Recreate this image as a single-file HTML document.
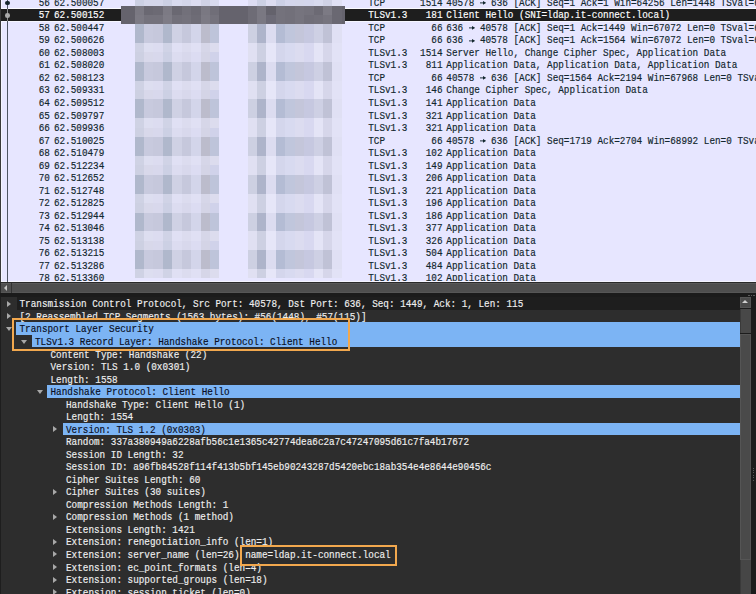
<!DOCTYPE html><html><head><meta charset="utf-8"><style>
*{margin:0;padding:0;box-sizing:border-box}
html,body{width:756px;height:594px;overflow:hidden;background:#1b1b1b}
body{position:relative;font-family:"Liberation Mono",monospace;font-size:9.3333px}
.a{position:absolute}
.pl{position:absolute;left:0;top:0;width:756px;height:282px;background:#e7e6ff;overflow:hidden;border-left:1px solid #3a3a3a}
.r{position:absolute;left:0;width:756px;height:12.53px;color:#12272e;white-space:pre}
.r span{position:absolute;top:1.5px;line-height:12.53px;transform:scaleY(1.14);transform-origin:0 8.75px;-webkit-text-stroke:0.15px currentColor}
.sel{background:#1e1e1e;color:#ffffff}
.dt{position:absolute;left:0;top:297.4px;width:740px;height:297px;background:#2d2d2d;overflow:hidden}
.d{position:absolute;left:0;width:740px;height:12.53px;color:#e6e6e6;white-space:pre}
.d span.t{position:absolute;top:2px;line-height:12.53px;transform:scaleY(1.14);transform-origin:0 8.75px;-webkit-text-stroke:0.15px currentColor}
.hl{position:absolute;top:0;height:100%;right:0;background:#7cb4f4}
</style></head><body>

<div class="pl">
<div class="r" style="top:-3.73px">
<span style="left:37.70px">56</span>
<span style="left:52.90px">62.500057</span>
<span style="left:367.20px">TCP</span>
<span style="left:419.10px">1514</span>
<svg class="a" style="left:479.30px;top:5.0px" width="6.2" height="3.8" viewBox="0 0 6.2 3.8"><path d="M0 1.9H3.6" stroke="#12272e" stroke-width="0.95"/><path d="M3.0 0.1L6.2 1.9L3.0 3.7Z" fill="#12272e"/></svg>
<span style="left:445.30px">40578   636 [ACK] Seq=1 Ack=1 Win=64256 Len=1448 TSval=6</span>
</div>
<div class="r sel" style="top:8.80px">
<span style="left:37.70px">57</span>
<span style="left:52.90px">62.500152</span>
<span style="left:367.20px">TLSv1.3</span>
<span style="left:424.70px">181</span>
<span style="left:445.30px">Client Hello (SNI=ldap.it-connect.local)</span>
</div>
<div class="r" style="top:21.33px">
<span style="left:37.70px">58</span>
<span style="left:52.90px">62.500447</span>
<span style="left:367.20px">TCP</span>
<span style="left:430.30px">66</span>
<svg class="a" style="left:468.10px;top:5.0px" width="6.2" height="3.8" viewBox="0 0 6.2 3.8"><path d="M0 1.9H3.6" stroke="#12272e" stroke-width="0.95"/><path d="M3.0 0.1L6.2 1.9L3.0 3.7Z" fill="#12272e"/></svg>
<span style="left:445.30px">636   40578 [ACK] Seq=1 Ack=1449 Win=67072 Len=0 TSval=6</span>
</div>
<div class="r" style="top:33.86px">
<span style="left:37.70px">59</span>
<span style="left:52.90px">62.500626</span>
<span style="left:367.20px">TCP</span>
<span style="left:430.30px">66</span>
<svg class="a" style="left:468.10px;top:5.0px" width="6.2" height="3.8" viewBox="0 0 6.2 3.8"><path d="M0 1.9H3.6" stroke="#12272e" stroke-width="0.95"/><path d="M3.0 0.1L6.2 1.9L3.0 3.7Z" fill="#12272e"/></svg>
<span style="left:445.30px">636   40578 [ACK] Seq=1 Ack=1564 Win=67072 Len=0 TSval=6</span>
</div>
<div class="r" style="top:46.39px">
<span style="left:37.70px">60</span>
<span style="left:52.90px">62.508003</span>
<span style="left:367.20px">TLSv1.3</span>
<span style="left:419.10px">1514</span>
<span style="left:445.30px">Server Hello, Change Cipher Spec, Application Data</span>
</div>
<div class="r" style="top:58.92px">
<span style="left:37.70px">61</span>
<span style="left:52.90px">62.508020</span>
<span style="left:367.20px">TLSv1.3</span>
<span style="left:424.70px">811</span>
<span style="left:445.30px">Application Data, Application Data, Application Data</span>
</div>
<div class="r" style="top:71.45px">
<span style="left:37.70px">62</span>
<span style="left:52.90px">62.508123</span>
<span style="left:367.20px">TCP</span>
<span style="left:430.30px">66</span>
<svg class="a" style="left:479.30px;top:5.0px" width="6.2" height="3.8" viewBox="0 0 6.2 3.8"><path d="M0 1.9H3.6" stroke="#12272e" stroke-width="0.95"/><path d="M3.0 0.1L6.2 1.9L3.0 3.7Z" fill="#12272e"/></svg>
<span style="left:445.30px">40578   636 [ACK] Seq=1564 Ack=2194 Win=67968 Len=0 TSval=6</span>
</div>
<div class="r" style="top:83.98px">
<span style="left:37.70px">63</span>
<span style="left:52.90px">62.509331</span>
<span style="left:367.20px">TLSv1.3</span>
<span style="left:424.70px">146</span>
<span style="left:445.30px">Change Cipher Spec, Application Data</span>
</div>
<div class="r" style="top:96.51px">
<span style="left:37.70px">64</span>
<span style="left:52.90px">62.509512</span>
<span style="left:367.20px">TLSv1.3</span>
<span style="left:424.70px">141</span>
<span style="left:445.30px">Application Data</span>
</div>
<div class="r" style="top:109.04px">
<span style="left:37.70px">65</span>
<span style="left:52.90px">62.509797</span>
<span style="left:367.20px">TLSv1.3</span>
<span style="left:424.70px">321</span>
<span style="left:445.30px">Application Data</span>
</div>
<div class="r" style="top:121.57px">
<span style="left:37.70px">66</span>
<span style="left:52.90px">62.509936</span>
<span style="left:367.20px">TLSv1.3</span>
<span style="left:424.70px">321</span>
<span style="left:445.30px">Application Data</span>
</div>
<div class="r" style="top:134.10px">
<span style="left:37.70px">67</span>
<span style="left:52.90px">62.510025</span>
<span style="left:367.20px">TCP</span>
<span style="left:430.30px">66</span>
<svg class="a" style="left:479.30px;top:5.0px" width="6.2" height="3.8" viewBox="0 0 6.2 3.8"><path d="M0 1.9H3.6" stroke="#12272e" stroke-width="0.95"/><path d="M3.0 0.1L6.2 1.9L3.0 3.7Z" fill="#12272e"/></svg>
<span style="left:445.30px">40578   636 [ACK] Seq=1719 Ack=2704 Win=68992 Len=0 TSval=6</span>
</div>
<div class="r" style="top:146.63px">
<span style="left:37.70px">68</span>
<span style="left:52.90px">62.510479</span>
<span style="left:367.20px">TLSv1.3</span>
<span style="left:424.70px">102</span>
<span style="left:445.30px">Application Data</span>
</div>
<div class="r" style="top:159.16px">
<span style="left:37.70px">69</span>
<span style="left:52.90px">62.512234</span>
<span style="left:367.20px">TLSv1.3</span>
<span style="left:424.70px">149</span>
<span style="left:445.30px">Application Data</span>
</div>
<div class="r" style="top:171.69px">
<span style="left:37.70px">70</span>
<span style="left:52.90px">62.512652</span>
<span style="left:367.20px">TLSv1.3</span>
<span style="left:424.70px">206</span>
<span style="left:445.30px">Application Data</span>
</div>
<div class="r" style="top:184.22px">
<span style="left:37.70px">71</span>
<span style="left:52.90px">62.512748</span>
<span style="left:367.20px">TLSv1.3</span>
<span style="left:424.70px">221</span>
<span style="left:445.30px">Application Data</span>
</div>
<div class="r" style="top:196.75px">
<span style="left:37.70px">72</span>
<span style="left:52.90px">62.512825</span>
<span style="left:367.20px">TLSv1.3</span>
<span style="left:424.70px">196</span>
<span style="left:445.30px">Application Data</span>
</div>
<div class="r" style="top:209.28px">
<span style="left:37.70px">73</span>
<span style="left:52.90px">62.512944</span>
<span style="left:367.20px">TLSv1.3</span>
<span style="left:424.70px">186</span>
<span style="left:445.30px">Application Data</span>
</div>
<div class="r" style="top:221.81px">
<span style="left:37.70px">74</span>
<span style="left:52.90px">62.513046</span>
<span style="left:367.20px">TLSv1.3</span>
<span style="left:424.70px">377</span>
<span style="left:445.30px">Application Data</span>
</div>
<div class="r" style="top:234.34px">
<span style="left:37.70px">75</span>
<span style="left:52.90px">62.513138</span>
<span style="left:367.20px">TLSv1.3</span>
<span style="left:424.70px">326</span>
<span style="left:445.30px">Application Data</span>
</div>
<div class="r" style="top:246.87px">
<span style="left:37.70px">76</span>
<span style="left:52.90px">62.513215</span>
<span style="left:367.20px">TLSv1.3</span>
<span style="left:424.70px">504</span>
<span style="left:445.30px">Application Data</span>
</div>
<div class="r" style="top:259.40px">
<span style="left:37.70px">77</span>
<span style="left:52.90px">62.513286</span>
<span style="left:367.20px">TLSv1.3</span>
<span style="left:424.70px">484</span>
<span style="left:445.30px">Application Data</span>
</div>
<div class="r" style="top:271.93px">
<span style="left:37.70px">78</span>
<span style="left:52.90px">62.513360</span>
<span style="left:367.20px">TLSv1.3</span>
<span style="left:424.70px">102</span>
<span style="left:445.30px">Application Data</span>
</div>
<div class="a" style="left:1px;top:7.8px;width:755px;height:1px;background:#fbfbff"></div>
<div class="a" style="left:1px;top:20.7px;width:755px;height:1px;background:#f6f6ff"></div>
<div class="a" style="left:120px;top:5.6px;width:223.8px;height:18.4px;background:#65636d"></div>
<div class="a" style="left:133.60px;top:0;width:9.42px;height:5.6px;background:#ccd0e4"></div>
<div class="a" style="left:133.60px;top:5.6px;width:9.42px;height:9.2px;background:#7a7882"></div>
<div class="a" style="left:133.60px;top:14.8px;width:9.42px;height:9.2px;background:#7c7a84"></div>
<div class="a" style="left:133.60px;top:24.00px;width:9.42px;height:9.43px;background:#b0b8cc"></div>
<div class="a" style="left:133.60px;top:33.43px;width:9.42px;height:9.43px;background:#b0b8cc"></div>
<div class="a" style="left:133.60px;top:42.86px;width:9.42px;height:9.43px;background:#cfd2e4"></div>
<div class="a" style="left:133.60px;top:52.29px;width:9.42px;height:9.43px;background:#cdd0e2"></div>
<div class="a" style="left:133.60px;top:61.72px;width:9.42px;height:9.43px;background:#b0b8cc"></div>
<div class="a" style="left:133.60px;top:71.15px;width:9.42px;height:9.43px;background:#b0b8cc"></div>
<div class="a" style="left:133.60px;top:80.58px;width:9.42px;height:9.43px;background:#cfd2e4"></div>
<div class="a" style="left:133.60px;top:90.01px;width:9.42px;height:9.43px;background:#cdd0e2"></div>
<div class="a" style="left:133.60px;top:99.44px;width:9.42px;height:9.43px;background:#b0b8cc"></div>
<div class="a" style="left:133.60px;top:108.87px;width:9.42px;height:9.43px;background:#b0b8cc"></div>
<div class="a" style="left:133.60px;top:118.30px;width:9.42px;height:9.43px;background:#cfd2e4"></div>
<div class="a" style="left:133.60px;top:127.73px;width:9.42px;height:9.43px;background:#cdd0e2"></div>
<div class="a" style="left:133.60px;top:137.16px;width:9.42px;height:9.43px;background:#b0b8cc"></div>
<div class="a" style="left:133.60px;top:146.59px;width:9.42px;height:9.43px;background:#b0b8cc"></div>
<div class="a" style="left:133.60px;top:156.02px;width:9.42px;height:9.43px;background:#cfd2e4"></div>
<div class="a" style="left:133.60px;top:165.45px;width:9.42px;height:9.43px;background:#cdd0e2"></div>
<div class="a" style="left:133.60px;top:174.88px;width:9.42px;height:9.43px;background:#b0b8cc"></div>
<div class="a" style="left:133.60px;top:184.31px;width:9.42px;height:9.43px;background:#b0b8cc"></div>
<div class="a" style="left:133.60px;top:193.74px;width:9.42px;height:9.43px;background:#cfd2e4"></div>
<div class="a" style="left:133.60px;top:203.17px;width:9.42px;height:9.43px;background:#cdd0e2"></div>
<div class="a" style="left:133.60px;top:212.60px;width:9.42px;height:9.43px;background:#b0b8cc"></div>
<div class="a" style="left:133.60px;top:222.03px;width:9.42px;height:9.43px;background:#b0b8cc"></div>
<div class="a" style="left:133.60px;top:231.46px;width:9.42px;height:9.43px;background:#cfd2e4"></div>
<div class="a" style="left:133.60px;top:240.89px;width:9.42px;height:9.43px;background:#cdd0e2"></div>
<div class="a" style="left:133.60px;top:250.32px;width:9.42px;height:9.43px;background:#b0b8cc"></div>
<div class="a" style="left:133.60px;top:259.75px;width:9.42px;height:9.43px;background:#b0b8cc"></div>
<div class="a" style="left:133.60px;top:269.18px;width:9.42px;height:9.12px;background:#cfd2e4"></div>
<div class="a" style="left:143.02px;top:0;width:9.42px;height:5.6px;background:#d4d6ea"></div>
<div class="a" style="left:143.02px;top:5.6px;width:9.42px;height:9.2px;background:#6a6872"></div>
<div class="a" style="left:143.02px;top:14.8px;width:9.42px;height:9.2px;background:#74727c"></div>
<div class="a" style="left:143.02px;top:24.00px;width:9.42px;height:9.43px;background:#c8cade"></div>
<div class="a" style="left:143.02px;top:33.43px;width:9.42px;height:9.43px;background:#c8cade"></div>
<div class="a" style="left:143.02px;top:42.86px;width:9.42px;height:9.43px;background:#dddef0"></div>
<div class="a" style="left:143.02px;top:52.29px;width:9.42px;height:9.43px;background:#d8d8ea"></div>
<div class="a" style="left:143.02px;top:61.72px;width:9.42px;height:9.43px;background:#c8cade"></div>
<div class="a" style="left:143.02px;top:71.15px;width:9.42px;height:9.43px;background:#c8cade"></div>
<div class="a" style="left:143.02px;top:80.58px;width:9.42px;height:9.43px;background:#dddef0"></div>
<div class="a" style="left:143.02px;top:90.01px;width:9.42px;height:9.43px;background:#d8d8ea"></div>
<div class="a" style="left:143.02px;top:99.44px;width:9.42px;height:9.43px;background:#c8cade"></div>
<div class="a" style="left:143.02px;top:108.87px;width:9.42px;height:9.43px;background:#c8cade"></div>
<div class="a" style="left:143.02px;top:118.30px;width:9.42px;height:9.43px;background:#dddef0"></div>
<div class="a" style="left:143.02px;top:127.73px;width:9.42px;height:9.43px;background:#d8d8ea"></div>
<div class="a" style="left:143.02px;top:137.16px;width:9.42px;height:9.43px;background:#c8cade"></div>
<div class="a" style="left:143.02px;top:146.59px;width:9.42px;height:9.43px;background:#c8cade"></div>
<div class="a" style="left:143.02px;top:156.02px;width:9.42px;height:9.43px;background:#dddef0"></div>
<div class="a" style="left:143.02px;top:165.45px;width:9.42px;height:9.43px;background:#d8d8ea"></div>
<div class="a" style="left:143.02px;top:174.88px;width:9.42px;height:9.43px;background:#c8cade"></div>
<div class="a" style="left:143.02px;top:184.31px;width:9.42px;height:9.43px;background:#c8cade"></div>
<div class="a" style="left:143.02px;top:193.74px;width:9.42px;height:9.43px;background:#dddef0"></div>
<div class="a" style="left:143.02px;top:203.17px;width:9.42px;height:9.43px;background:#d8d8ea"></div>
<div class="a" style="left:143.02px;top:212.60px;width:9.42px;height:9.43px;background:#c8cade"></div>
<div class="a" style="left:143.02px;top:222.03px;width:9.42px;height:9.43px;background:#c8cade"></div>
<div class="a" style="left:143.02px;top:231.46px;width:9.42px;height:9.43px;background:#dddef0"></div>
<div class="a" style="left:143.02px;top:240.89px;width:9.42px;height:9.43px;background:#d8d8ea"></div>
<div class="a" style="left:143.02px;top:250.32px;width:9.42px;height:9.43px;background:#c8cade"></div>
<div class="a" style="left:143.02px;top:259.75px;width:9.42px;height:9.43px;background:#c8cade"></div>
<div class="a" style="left:143.02px;top:269.18px;width:9.42px;height:9.12px;background:#dddef0"></div>
<div class="a" style="left:152.44px;top:0;width:9.42px;height:5.6px;background:#d4d6ea"></div>
<div class="a" style="left:152.44px;top:5.6px;width:9.42px;height:9.2px;background:#6c6a74"></div>
<div class="a" style="left:152.44px;top:14.8px;width:9.42px;height:9.2px;background:#74727c"></div>
<div class="a" style="left:152.44px;top:24.00px;width:9.42px;height:9.43px;background:#c6c8dc"></div>
<div class="a" style="left:152.44px;top:33.43px;width:9.42px;height:9.43px;background:#c6c8dc"></div>
<div class="a" style="left:152.44px;top:42.86px;width:9.42px;height:9.43px;background:#dcdcf0"></div>
<div class="a" style="left:152.44px;top:52.29px;width:9.42px;height:9.43px;background:#d8d8ec"></div>
<div class="a" style="left:152.44px;top:61.72px;width:9.42px;height:9.43px;background:#c6c8dc"></div>
<div class="a" style="left:152.44px;top:71.15px;width:9.42px;height:9.43px;background:#c6c8dc"></div>
<div class="a" style="left:152.44px;top:80.58px;width:9.42px;height:9.43px;background:#dcdcf0"></div>
<div class="a" style="left:152.44px;top:90.01px;width:9.42px;height:9.43px;background:#d8d8ec"></div>
<div class="a" style="left:152.44px;top:99.44px;width:9.42px;height:9.43px;background:#c6c8dc"></div>
<div class="a" style="left:152.44px;top:108.87px;width:9.42px;height:9.43px;background:#c6c8dc"></div>
<div class="a" style="left:152.44px;top:118.30px;width:9.42px;height:9.43px;background:#dcdcf0"></div>
<div class="a" style="left:152.44px;top:127.73px;width:9.42px;height:9.43px;background:#d8d8ec"></div>
<div class="a" style="left:152.44px;top:137.16px;width:9.42px;height:9.43px;background:#c6c8dc"></div>
<div class="a" style="left:152.44px;top:146.59px;width:9.42px;height:9.43px;background:#c6c8dc"></div>
<div class="a" style="left:152.44px;top:156.02px;width:9.42px;height:9.43px;background:#dcdcf0"></div>
<div class="a" style="left:152.44px;top:165.45px;width:9.42px;height:9.43px;background:#d8d8ec"></div>
<div class="a" style="left:152.44px;top:174.88px;width:9.42px;height:9.43px;background:#c6c8dc"></div>
<div class="a" style="left:152.44px;top:184.31px;width:9.42px;height:9.43px;background:#c6c8dc"></div>
<div class="a" style="left:152.44px;top:193.74px;width:9.42px;height:9.43px;background:#dcdcf0"></div>
<div class="a" style="left:152.44px;top:203.17px;width:9.42px;height:9.43px;background:#d8d8ec"></div>
<div class="a" style="left:152.44px;top:212.60px;width:9.42px;height:9.43px;background:#c6c8dc"></div>
<div class="a" style="left:152.44px;top:222.03px;width:9.42px;height:9.43px;background:#c6c8dc"></div>
<div class="a" style="left:152.44px;top:231.46px;width:9.42px;height:9.43px;background:#dcdcf0"></div>
<div class="a" style="left:152.44px;top:240.89px;width:9.42px;height:9.43px;background:#d8d8ec"></div>
<div class="a" style="left:152.44px;top:250.32px;width:9.42px;height:9.43px;background:#c6c8dc"></div>
<div class="a" style="left:152.44px;top:259.75px;width:9.42px;height:9.43px;background:#c6c8dc"></div>
<div class="a" style="left:152.44px;top:269.18px;width:9.42px;height:9.12px;background:#dcdcf0"></div>
<div class="a" style="left:161.86px;top:0;width:9.42px;height:5.6px;background:#ccd0e4"></div>
<div class="a" style="left:161.86px;top:5.6px;width:9.42px;height:9.2px;background:#7c7a84"></div>
<div class="a" style="left:161.86px;top:14.8px;width:9.42px;height:9.2px;background:#7e7c86"></div>
<div class="a" style="left:161.86px;top:24.00px;width:9.42px;height:9.43px;background:#b0b8cc"></div>
<div class="a" style="left:161.86px;top:33.43px;width:9.42px;height:9.43px;background:#b0b8cc"></div>
<div class="a" style="left:161.86px;top:42.86px;width:9.42px;height:9.43px;background:#d0d3e6"></div>
<div class="a" style="left:161.86px;top:52.29px;width:9.42px;height:9.43px;background:#ccd0e4"></div>
<div class="a" style="left:161.86px;top:61.72px;width:9.42px;height:9.43px;background:#b0b8cc"></div>
<div class="a" style="left:161.86px;top:71.15px;width:9.42px;height:9.43px;background:#b0b8cc"></div>
<div class="a" style="left:161.86px;top:80.58px;width:9.42px;height:9.43px;background:#d0d3e6"></div>
<div class="a" style="left:161.86px;top:90.01px;width:9.42px;height:9.43px;background:#ccd0e4"></div>
<div class="a" style="left:161.86px;top:99.44px;width:9.42px;height:9.43px;background:#b0b8cc"></div>
<div class="a" style="left:161.86px;top:108.87px;width:9.42px;height:9.43px;background:#b0b8cc"></div>
<div class="a" style="left:161.86px;top:118.30px;width:9.42px;height:9.43px;background:#d0d3e6"></div>
<div class="a" style="left:161.86px;top:127.73px;width:9.42px;height:9.43px;background:#ccd0e4"></div>
<div class="a" style="left:161.86px;top:137.16px;width:9.42px;height:9.43px;background:#b0b8cc"></div>
<div class="a" style="left:161.86px;top:146.59px;width:9.42px;height:9.43px;background:#b0b8cc"></div>
<div class="a" style="left:161.86px;top:156.02px;width:9.42px;height:9.43px;background:#d0d3e6"></div>
<div class="a" style="left:161.86px;top:165.45px;width:9.42px;height:9.43px;background:#ccd0e4"></div>
<div class="a" style="left:161.86px;top:174.88px;width:9.42px;height:9.43px;background:#b0b8cc"></div>
<div class="a" style="left:161.86px;top:184.31px;width:9.42px;height:9.43px;background:#b0b8cc"></div>
<div class="a" style="left:161.86px;top:193.74px;width:9.42px;height:9.43px;background:#d0d3e6"></div>
<div class="a" style="left:161.86px;top:203.17px;width:9.42px;height:9.43px;background:#ccd0e4"></div>
<div class="a" style="left:161.86px;top:212.60px;width:9.42px;height:9.43px;background:#b0b8cc"></div>
<div class="a" style="left:161.86px;top:222.03px;width:9.42px;height:9.43px;background:#b0b8cc"></div>
<div class="a" style="left:161.86px;top:231.46px;width:9.42px;height:9.43px;background:#d0d3e6"></div>
<div class="a" style="left:161.86px;top:240.89px;width:9.42px;height:9.43px;background:#ccd0e4"></div>
<div class="a" style="left:161.86px;top:250.32px;width:9.42px;height:9.43px;background:#b0b8cc"></div>
<div class="a" style="left:161.86px;top:259.75px;width:9.42px;height:9.43px;background:#b0b8cc"></div>
<div class="a" style="left:161.86px;top:269.18px;width:9.42px;height:9.12px;background:#d0d3e6"></div>
<div class="a" style="left:171.28px;top:0;width:9.42px;height:5.6px;background:#d8daee"></div>
<div class="a" style="left:171.28px;top:5.6px;width:9.42px;height:9.2px;background:#6a6872"></div>
<div class="a" style="left:171.28px;top:14.8px;width:9.42px;height:9.2px;background:#72707a"></div>
<div class="a" style="left:171.28px;top:24.00px;width:9.42px;height:9.43px;background:#cfd1e4"></div>
<div class="a" style="left:171.28px;top:33.43px;width:9.42px;height:9.43px;background:#cfd1e4"></div>
<div class="a" style="left:171.28px;top:42.86px;width:9.42px;height:9.43px;background:#e0e0f4"></div>
<div class="a" style="left:171.28px;top:52.29px;width:9.42px;height:9.43px;background:#dcdcf0"></div>
<div class="a" style="left:171.28px;top:61.72px;width:9.42px;height:9.43px;background:#cfd1e4"></div>
<div class="a" style="left:171.28px;top:71.15px;width:9.42px;height:9.43px;background:#cfd1e4"></div>
<div class="a" style="left:171.28px;top:80.58px;width:9.42px;height:9.43px;background:#e0e0f4"></div>
<div class="a" style="left:171.28px;top:90.01px;width:9.42px;height:9.43px;background:#dcdcf0"></div>
<div class="a" style="left:171.28px;top:99.44px;width:9.42px;height:9.43px;background:#cfd1e4"></div>
<div class="a" style="left:171.28px;top:108.87px;width:9.42px;height:9.43px;background:#cfd1e4"></div>
<div class="a" style="left:171.28px;top:118.30px;width:9.42px;height:9.43px;background:#e0e0f4"></div>
<div class="a" style="left:171.28px;top:127.73px;width:9.42px;height:9.43px;background:#dcdcf0"></div>
<div class="a" style="left:171.28px;top:137.16px;width:9.42px;height:9.43px;background:#cfd1e4"></div>
<div class="a" style="left:171.28px;top:146.59px;width:9.42px;height:9.43px;background:#cfd1e4"></div>
<div class="a" style="left:171.28px;top:156.02px;width:9.42px;height:9.43px;background:#e0e0f4"></div>
<div class="a" style="left:171.28px;top:165.45px;width:9.42px;height:9.43px;background:#dcdcf0"></div>
<div class="a" style="left:171.28px;top:174.88px;width:9.42px;height:9.43px;background:#cfd1e4"></div>
<div class="a" style="left:171.28px;top:184.31px;width:9.42px;height:9.43px;background:#cfd1e4"></div>
<div class="a" style="left:171.28px;top:193.74px;width:9.42px;height:9.43px;background:#e0e0f4"></div>
<div class="a" style="left:171.28px;top:203.17px;width:9.42px;height:9.43px;background:#dcdcf0"></div>
<div class="a" style="left:171.28px;top:212.60px;width:9.42px;height:9.43px;background:#cfd1e4"></div>
<div class="a" style="left:171.28px;top:222.03px;width:9.42px;height:9.43px;background:#cfd1e4"></div>
<div class="a" style="left:171.28px;top:231.46px;width:9.42px;height:9.43px;background:#e0e0f4"></div>
<div class="a" style="left:171.28px;top:240.89px;width:9.42px;height:9.43px;background:#dcdcf0"></div>
<div class="a" style="left:171.28px;top:250.32px;width:9.42px;height:9.43px;background:#cfd1e4"></div>
<div class="a" style="left:171.28px;top:259.75px;width:9.42px;height:9.43px;background:#cfd1e4"></div>
<div class="a" style="left:171.28px;top:269.18px;width:9.42px;height:9.12px;background:#e0e0f4"></div>
<div class="a" style="left:180.70px;top:0;width:9.42px;height:5.6px;background:#d4d6ea"></div>
<div class="a" style="left:180.70px;top:5.6px;width:9.42px;height:9.2px;background:#72707a"></div>
<div class="a" style="left:180.70px;top:14.8px;width:9.42px;height:9.2px;background:#74727c"></div>
<div class="a" style="left:180.70px;top:24.00px;width:9.42px;height:9.43px;background:#c6c8dc"></div>
<div class="a" style="left:180.70px;top:33.43px;width:9.42px;height:9.43px;background:#c6c8dc"></div>
<div class="a" style="left:180.70px;top:42.86px;width:9.42px;height:9.43px;background:#dcdcef"></div>
<div class="a" style="left:180.70px;top:52.29px;width:9.42px;height:9.43px;background:#d8d8ec"></div>
<div class="a" style="left:180.70px;top:61.72px;width:9.42px;height:9.43px;background:#c6c8dc"></div>
<div class="a" style="left:180.70px;top:71.15px;width:9.42px;height:9.43px;background:#c6c8dc"></div>
<div class="a" style="left:180.70px;top:80.58px;width:9.42px;height:9.43px;background:#dcdcef"></div>
<div class="a" style="left:180.70px;top:90.01px;width:9.42px;height:9.43px;background:#d8d8ec"></div>
<div class="a" style="left:180.70px;top:99.44px;width:9.42px;height:9.43px;background:#c6c8dc"></div>
<div class="a" style="left:180.70px;top:108.87px;width:9.42px;height:9.43px;background:#c6c8dc"></div>
<div class="a" style="left:180.70px;top:118.30px;width:9.42px;height:9.43px;background:#dcdcef"></div>
<div class="a" style="left:180.70px;top:127.73px;width:9.42px;height:9.43px;background:#d8d8ec"></div>
<div class="a" style="left:180.70px;top:137.16px;width:9.42px;height:9.43px;background:#c6c8dc"></div>
<div class="a" style="left:180.70px;top:146.59px;width:9.42px;height:9.43px;background:#c6c8dc"></div>
<div class="a" style="left:180.70px;top:156.02px;width:9.42px;height:9.43px;background:#dcdcef"></div>
<div class="a" style="left:180.70px;top:165.45px;width:9.42px;height:9.43px;background:#d8d8ec"></div>
<div class="a" style="left:180.70px;top:174.88px;width:9.42px;height:9.43px;background:#c6c8dc"></div>
<div class="a" style="left:180.70px;top:184.31px;width:9.42px;height:9.43px;background:#c6c8dc"></div>
<div class="a" style="left:180.70px;top:193.74px;width:9.42px;height:9.43px;background:#dcdcef"></div>
<div class="a" style="left:180.70px;top:203.17px;width:9.42px;height:9.43px;background:#d8d8ec"></div>
<div class="a" style="left:180.70px;top:212.60px;width:9.42px;height:9.43px;background:#c6c8dc"></div>
<div class="a" style="left:180.70px;top:222.03px;width:9.42px;height:9.43px;background:#c6c8dc"></div>
<div class="a" style="left:180.70px;top:231.46px;width:9.42px;height:9.43px;background:#dcdcef"></div>
<div class="a" style="left:180.70px;top:240.89px;width:9.42px;height:9.43px;background:#d8d8ec"></div>
<div class="a" style="left:180.70px;top:250.32px;width:9.42px;height:9.43px;background:#c6c8dc"></div>
<div class="a" style="left:180.70px;top:259.75px;width:9.42px;height:9.43px;background:#c6c8dc"></div>
<div class="a" style="left:180.70px;top:269.18px;width:9.42px;height:9.12px;background:#dcdcef"></div>
<div class="a" style="left:190.12px;top:0;width:9.42px;height:5.6px;background:#dcdcf0"></div>
<div class="a" style="left:190.12px;top:5.6px;width:9.42px;height:9.2px;background:#6c6a74"></div>
<div class="a" style="left:190.12px;top:14.8px;width:9.42px;height:9.2px;background:#6e6c76"></div>
<div class="a" style="left:190.12px;top:24.00px;width:9.42px;height:9.43px;background:#d3d5ea"></div>
<div class="a" style="left:190.12px;top:33.43px;width:9.42px;height:9.43px;background:#d3d5ea"></div>
<div class="a" style="left:190.12px;top:42.86px;width:9.42px;height:9.43px;background:#e0e0f4"></div>
<div class="a" style="left:190.12px;top:52.29px;width:9.42px;height:9.43px;background:#dcdcf2"></div>
<div class="a" style="left:190.12px;top:61.72px;width:9.42px;height:9.43px;background:#d3d5ea"></div>
<div class="a" style="left:190.12px;top:71.15px;width:9.42px;height:9.43px;background:#d3d5ea"></div>
<div class="a" style="left:190.12px;top:80.58px;width:9.42px;height:9.43px;background:#e0e0f4"></div>
<div class="a" style="left:190.12px;top:90.01px;width:9.42px;height:9.43px;background:#dcdcf2"></div>
<div class="a" style="left:190.12px;top:99.44px;width:9.42px;height:9.43px;background:#d3d5ea"></div>
<div class="a" style="left:190.12px;top:108.87px;width:9.42px;height:9.43px;background:#d3d5ea"></div>
<div class="a" style="left:190.12px;top:118.30px;width:9.42px;height:9.43px;background:#e0e0f4"></div>
<div class="a" style="left:190.12px;top:127.73px;width:9.42px;height:9.43px;background:#dcdcf2"></div>
<div class="a" style="left:190.12px;top:137.16px;width:9.42px;height:9.43px;background:#d3d5ea"></div>
<div class="a" style="left:190.12px;top:146.59px;width:9.42px;height:9.43px;background:#d3d5ea"></div>
<div class="a" style="left:190.12px;top:156.02px;width:9.42px;height:9.43px;background:#e0e0f4"></div>
<div class="a" style="left:190.12px;top:165.45px;width:9.42px;height:9.43px;background:#dcdcf2"></div>
<div class="a" style="left:190.12px;top:174.88px;width:9.42px;height:9.43px;background:#d3d5ea"></div>
<div class="a" style="left:190.12px;top:184.31px;width:9.42px;height:9.43px;background:#d3d5ea"></div>
<div class="a" style="left:190.12px;top:193.74px;width:9.42px;height:9.43px;background:#e0e0f4"></div>
<div class="a" style="left:190.12px;top:203.17px;width:9.42px;height:9.43px;background:#dcdcf2"></div>
<div class="a" style="left:190.12px;top:212.60px;width:9.42px;height:9.43px;background:#d3d5ea"></div>
<div class="a" style="left:190.12px;top:222.03px;width:9.42px;height:9.43px;background:#d3d5ea"></div>
<div class="a" style="left:190.12px;top:231.46px;width:9.42px;height:9.43px;background:#e0e0f4"></div>
<div class="a" style="left:190.12px;top:240.89px;width:9.42px;height:9.43px;background:#dcdcf2"></div>
<div class="a" style="left:190.12px;top:250.32px;width:9.42px;height:9.43px;background:#d3d5ea"></div>
<div class="a" style="left:190.12px;top:259.75px;width:9.42px;height:9.43px;background:#d3d5ea"></div>
<div class="a" style="left:190.12px;top:269.18px;width:9.42px;height:9.12px;background:#e0e0f4"></div>
<div class="a" style="left:199.54px;top:0;width:9.42px;height:5.6px;background:#d0d2e6"></div>
<div class="a" style="left:199.54px;top:5.6px;width:9.42px;height:9.2px;background:#7a7882"></div>
<div class="a" style="left:199.54px;top:14.8px;width:9.42px;height:9.2px;background:#7c7a84"></div>
<div class="a" style="left:199.54px;top:24.00px;width:9.42px;height:9.43px;background:#bcbccc"></div>
<div class="a" style="left:199.54px;top:33.43px;width:9.42px;height:9.43px;background:#bcbccc"></div>
<div class="a" style="left:199.54px;top:42.86px;width:9.42px;height:9.43px;background:#d6d6e8"></div>
<div class="a" style="left:199.54px;top:52.29px;width:9.42px;height:9.43px;background:#d4d4e6"></div>
<div class="a" style="left:199.54px;top:61.72px;width:9.42px;height:9.43px;background:#bcbccc"></div>
<div class="a" style="left:199.54px;top:71.15px;width:9.42px;height:9.43px;background:#bcbccc"></div>
<div class="a" style="left:199.54px;top:80.58px;width:9.42px;height:9.43px;background:#d6d6e8"></div>
<div class="a" style="left:199.54px;top:90.01px;width:9.42px;height:9.43px;background:#d4d4e6"></div>
<div class="a" style="left:199.54px;top:99.44px;width:9.42px;height:9.43px;background:#bcbccc"></div>
<div class="a" style="left:199.54px;top:108.87px;width:9.42px;height:9.43px;background:#bcbccc"></div>
<div class="a" style="left:199.54px;top:118.30px;width:9.42px;height:9.43px;background:#d6d6e8"></div>
<div class="a" style="left:199.54px;top:127.73px;width:9.42px;height:9.43px;background:#d4d4e6"></div>
<div class="a" style="left:199.54px;top:137.16px;width:9.42px;height:9.43px;background:#bcbccc"></div>
<div class="a" style="left:199.54px;top:146.59px;width:9.42px;height:9.43px;background:#bcbccc"></div>
<div class="a" style="left:199.54px;top:156.02px;width:9.42px;height:9.43px;background:#d6d6e8"></div>
<div class="a" style="left:199.54px;top:165.45px;width:9.42px;height:9.43px;background:#d4d4e6"></div>
<div class="a" style="left:199.54px;top:174.88px;width:9.42px;height:9.43px;background:#bcbccc"></div>
<div class="a" style="left:199.54px;top:184.31px;width:9.42px;height:9.43px;background:#bcbccc"></div>
<div class="a" style="left:199.54px;top:193.74px;width:9.42px;height:9.43px;background:#d6d6e8"></div>
<div class="a" style="left:199.54px;top:203.17px;width:9.42px;height:9.43px;background:#d4d4e6"></div>
<div class="a" style="left:199.54px;top:212.60px;width:9.42px;height:9.43px;background:#bcbccc"></div>
<div class="a" style="left:199.54px;top:222.03px;width:9.42px;height:9.43px;background:#bcbccc"></div>
<div class="a" style="left:199.54px;top:231.46px;width:9.42px;height:9.43px;background:#d6d6e8"></div>
<div class="a" style="left:199.54px;top:240.89px;width:9.42px;height:9.43px;background:#d4d4e6"></div>
<div class="a" style="left:199.54px;top:250.32px;width:9.42px;height:9.43px;background:#bcbccc"></div>
<div class="a" style="left:199.54px;top:259.75px;width:9.42px;height:9.43px;background:#bcbccc"></div>
<div class="a" style="left:199.54px;top:269.18px;width:9.42px;height:9.12px;background:#d6d6e8"></div>
<div class="a" style="left:208.96px;top:0;width:9.42px;height:5.6px;background:#d8daee"></div>
<div class="a" style="left:208.96px;top:5.6px;width:9.42px;height:9.2px;background:#706e78"></div>
<div class="a" style="left:208.96px;top:14.8px;width:9.42px;height:9.2px;background:#74727c"></div>
<div class="a" style="left:208.96px;top:24.00px;width:9.42px;height:9.43px;background:#bec4da"></div>
<div class="a" style="left:208.96px;top:33.43px;width:9.42px;height:9.43px;background:#bec4da"></div>
<div class="a" style="left:208.96px;top:42.86px;width:9.42px;height:9.43px;background:#dcdcee"></div>
<div class="a" style="left:208.96px;top:52.29px;width:9.42px;height:9.43px;background:#d0d2ea"></div>
<div class="a" style="left:208.96px;top:61.72px;width:9.42px;height:9.43px;background:#bec4da"></div>
<div class="a" style="left:208.96px;top:71.15px;width:9.42px;height:9.43px;background:#bec4da"></div>
<div class="a" style="left:208.96px;top:80.58px;width:9.42px;height:9.43px;background:#dcdcee"></div>
<div class="a" style="left:208.96px;top:90.01px;width:9.42px;height:9.43px;background:#d0d2ea"></div>
<div class="a" style="left:208.96px;top:99.44px;width:9.42px;height:9.43px;background:#bec4da"></div>
<div class="a" style="left:208.96px;top:108.87px;width:9.42px;height:9.43px;background:#bec4da"></div>
<div class="a" style="left:208.96px;top:118.30px;width:9.42px;height:9.43px;background:#dcdcee"></div>
<div class="a" style="left:208.96px;top:127.73px;width:9.42px;height:9.43px;background:#d0d2ea"></div>
<div class="a" style="left:208.96px;top:137.16px;width:9.42px;height:9.43px;background:#bec4da"></div>
<div class="a" style="left:208.96px;top:146.59px;width:9.42px;height:9.43px;background:#bec4da"></div>
<div class="a" style="left:208.96px;top:156.02px;width:9.42px;height:9.43px;background:#dcdcee"></div>
<div class="a" style="left:208.96px;top:165.45px;width:9.42px;height:9.43px;background:#d0d2ea"></div>
<div class="a" style="left:208.96px;top:174.88px;width:9.42px;height:9.43px;background:#bec4da"></div>
<div class="a" style="left:208.96px;top:184.31px;width:9.42px;height:9.43px;background:#bec4da"></div>
<div class="a" style="left:208.96px;top:193.74px;width:9.42px;height:9.43px;background:#dcdcee"></div>
<div class="a" style="left:208.96px;top:203.17px;width:9.42px;height:9.43px;background:#d0d2ea"></div>
<div class="a" style="left:208.96px;top:212.60px;width:9.42px;height:9.43px;background:#bec4da"></div>
<div class="a" style="left:208.96px;top:222.03px;width:9.42px;height:9.43px;background:#bec4da"></div>
<div class="a" style="left:208.96px;top:231.46px;width:9.42px;height:9.43px;background:#dcdcee"></div>
<div class="a" style="left:208.96px;top:240.89px;width:9.42px;height:9.43px;background:#d0d2ea"></div>
<div class="a" style="left:208.96px;top:250.32px;width:9.42px;height:9.43px;background:#bec4da"></div>
<div class="a" style="left:208.96px;top:259.75px;width:9.42px;height:9.43px;background:#bec4da"></div>
<div class="a" style="left:208.96px;top:269.18px;width:9.42px;height:9.12px;background:#dcdcee"></div>
<div class="a" style="left:246.64px;top:0;width:9.42px;height:5.6px;background:#dcdcf2"></div>
<div class="a" style="left:246.64px;top:5.6px;width:9.42px;height:9.2px;background:#6e6c76"></div>
<div class="a" style="left:246.64px;top:14.8px;width:9.42px;height:9.2px;background:#6e6c76"></div>
<div class="a" style="left:246.64px;top:24.00px;width:9.42px;height:9.43px;background:#cdd0e2"></div>
<div class="a" style="left:246.64px;top:33.43px;width:9.42px;height:9.43px;background:#cdd0e2"></div>
<div class="a" style="left:246.64px;top:42.86px;width:9.42px;height:9.43px;background:#e0e0f2"></div>
<div class="a" style="left:246.64px;top:52.29px;width:9.42px;height:9.43px;background:#e0e0f2"></div>
<div class="a" style="left:246.64px;top:61.72px;width:9.42px;height:9.43px;background:#cdd0e2"></div>
<div class="a" style="left:246.64px;top:71.15px;width:9.42px;height:9.43px;background:#cdd0e2"></div>
<div class="a" style="left:246.64px;top:80.58px;width:9.42px;height:9.43px;background:#e0e0f2"></div>
<div class="a" style="left:246.64px;top:90.01px;width:9.42px;height:9.43px;background:#e0e0f2"></div>
<div class="a" style="left:246.64px;top:99.44px;width:9.42px;height:9.43px;background:#cdd0e2"></div>
<div class="a" style="left:246.64px;top:108.87px;width:9.42px;height:9.43px;background:#cdd0e2"></div>
<div class="a" style="left:246.64px;top:118.30px;width:9.42px;height:9.43px;background:#e0e0f2"></div>
<div class="a" style="left:246.64px;top:127.73px;width:9.42px;height:9.43px;background:#e0e0f2"></div>
<div class="a" style="left:246.64px;top:137.16px;width:9.42px;height:9.43px;background:#cdd0e2"></div>
<div class="a" style="left:246.64px;top:146.59px;width:9.42px;height:9.43px;background:#cdd0e2"></div>
<div class="a" style="left:246.64px;top:156.02px;width:9.42px;height:9.43px;background:#e0e0f2"></div>
<div class="a" style="left:246.64px;top:165.45px;width:9.42px;height:9.43px;background:#e0e0f2"></div>
<div class="a" style="left:246.64px;top:174.88px;width:9.42px;height:9.43px;background:#cdd0e2"></div>
<div class="a" style="left:246.64px;top:184.31px;width:9.42px;height:9.43px;background:#cdd0e2"></div>
<div class="a" style="left:246.64px;top:193.74px;width:9.42px;height:9.43px;background:#e0e0f2"></div>
<div class="a" style="left:246.64px;top:203.17px;width:9.42px;height:9.43px;background:#e0e0f2"></div>
<div class="a" style="left:246.64px;top:212.60px;width:9.42px;height:9.43px;background:#cdd0e2"></div>
<div class="a" style="left:246.64px;top:222.03px;width:9.42px;height:9.43px;background:#cdd0e2"></div>
<div class="a" style="left:246.64px;top:231.46px;width:9.42px;height:9.43px;background:#e0e0f2"></div>
<div class="a" style="left:246.64px;top:240.89px;width:9.42px;height:9.43px;background:#e0e0f2"></div>
<div class="a" style="left:246.64px;top:250.32px;width:9.42px;height:9.43px;background:#cdd0e2"></div>
<div class="a" style="left:246.64px;top:259.75px;width:9.42px;height:9.43px;background:#cdd0e2"></div>
<div class="a" style="left:246.64px;top:269.18px;width:9.42px;height:9.12px;background:#e0e0f2"></div>
<div class="a" style="left:256.06px;top:0;width:9.42px;height:5.6px;background:#ccd0e4"></div>
<div class="a" style="left:256.06px;top:5.6px;width:9.42px;height:9.2px;background:#7a7882"></div>
<div class="a" style="left:256.06px;top:14.8px;width:9.42px;height:9.2px;background:#7a7882"></div>
<div class="a" style="left:256.06px;top:24.00px;width:9.42px;height:9.43px;background:#aeb4ca"></div>
<div class="a" style="left:256.06px;top:33.43px;width:9.42px;height:9.43px;background:#aeb4ca"></div>
<div class="a" style="left:256.06px;top:42.86px;width:9.42px;height:9.43px;background:#cdd0e2"></div>
<div class="a" style="left:256.06px;top:52.29px;width:9.42px;height:9.43px;background:#cdd0e2"></div>
<div class="a" style="left:256.06px;top:61.72px;width:9.42px;height:9.43px;background:#aeb4ca"></div>
<div class="a" style="left:256.06px;top:71.15px;width:9.42px;height:9.43px;background:#aeb4ca"></div>
<div class="a" style="left:256.06px;top:80.58px;width:9.42px;height:9.43px;background:#cdd0e2"></div>
<div class="a" style="left:256.06px;top:90.01px;width:9.42px;height:9.43px;background:#cdd0e2"></div>
<div class="a" style="left:256.06px;top:99.44px;width:9.42px;height:9.43px;background:#aeb4ca"></div>
<div class="a" style="left:256.06px;top:108.87px;width:9.42px;height:9.43px;background:#aeb4ca"></div>
<div class="a" style="left:256.06px;top:118.30px;width:9.42px;height:9.43px;background:#cdd0e2"></div>
<div class="a" style="left:256.06px;top:127.73px;width:9.42px;height:9.43px;background:#cdd0e2"></div>
<div class="a" style="left:256.06px;top:137.16px;width:9.42px;height:9.43px;background:#aeb4ca"></div>
<div class="a" style="left:256.06px;top:146.59px;width:9.42px;height:9.43px;background:#aeb4ca"></div>
<div class="a" style="left:256.06px;top:156.02px;width:9.42px;height:9.43px;background:#cdd0e2"></div>
<div class="a" style="left:256.06px;top:165.45px;width:9.42px;height:9.43px;background:#cdd0e2"></div>
<div class="a" style="left:256.06px;top:174.88px;width:9.42px;height:9.43px;background:#aeb4ca"></div>
<div class="a" style="left:256.06px;top:184.31px;width:9.42px;height:9.43px;background:#aeb4ca"></div>
<div class="a" style="left:256.06px;top:193.74px;width:9.42px;height:9.43px;background:#cdd0e2"></div>
<div class="a" style="left:256.06px;top:203.17px;width:9.42px;height:9.43px;background:#cdd0e2"></div>
<div class="a" style="left:256.06px;top:212.60px;width:9.42px;height:9.43px;background:#aeb4ca"></div>
<div class="a" style="left:256.06px;top:222.03px;width:9.42px;height:9.43px;background:#aeb4ca"></div>
<div class="a" style="left:256.06px;top:231.46px;width:9.42px;height:9.43px;background:#cdd0e2"></div>
<div class="a" style="left:256.06px;top:240.89px;width:9.42px;height:9.43px;background:#cdd0e2"></div>
<div class="a" style="left:256.06px;top:250.32px;width:9.42px;height:9.43px;background:#aeb4ca"></div>
<div class="a" style="left:256.06px;top:259.75px;width:9.42px;height:9.43px;background:#aeb4ca"></div>
<div class="a" style="left:256.06px;top:269.18px;width:9.42px;height:9.12px;background:#cdd0e2"></div>
<div class="a" style="left:265.48px;top:0;width:9.42px;height:5.6px;background:#dcdcf0"></div>
<div class="a" style="left:265.48px;top:5.6px;width:9.42px;height:9.2px;background:#64626c"></div>
<div class="a" style="left:265.48px;top:14.8px;width:9.42px;height:9.2px;background:#6c6a76"></div>
<div class="a" style="left:265.48px;top:24.00px;width:9.42px;height:9.43px;background:#dcdcf0"></div>
<div class="a" style="left:265.48px;top:33.43px;width:9.42px;height:9.43px;background:#dcdcf0"></div>
<div class="a" style="left:265.48px;top:42.86px;width:9.42px;height:9.43px;background:#e6e6f8"></div>
<div class="a" style="left:265.48px;top:52.29px;width:9.42px;height:9.43px;background:#e6e6f8"></div>
<div class="a" style="left:265.48px;top:61.72px;width:9.42px;height:9.43px;background:#dcdcf0"></div>
<div class="a" style="left:265.48px;top:71.15px;width:9.42px;height:9.43px;background:#dcdcf0"></div>
<div class="a" style="left:265.48px;top:80.58px;width:9.42px;height:9.43px;background:#e6e6f8"></div>
<div class="a" style="left:265.48px;top:90.01px;width:9.42px;height:9.43px;background:#e6e6f8"></div>
<div class="a" style="left:265.48px;top:99.44px;width:9.42px;height:9.43px;background:#dcdcf0"></div>
<div class="a" style="left:265.48px;top:108.87px;width:9.42px;height:9.43px;background:#dcdcf0"></div>
<div class="a" style="left:265.48px;top:118.30px;width:9.42px;height:9.43px;background:#e6e6f8"></div>
<div class="a" style="left:265.48px;top:127.73px;width:9.42px;height:9.43px;background:#e6e6f8"></div>
<div class="a" style="left:265.48px;top:137.16px;width:9.42px;height:9.43px;background:#dcdcf0"></div>
<div class="a" style="left:265.48px;top:146.59px;width:9.42px;height:9.43px;background:#dcdcf0"></div>
<div class="a" style="left:265.48px;top:156.02px;width:9.42px;height:9.43px;background:#e6e6f8"></div>
<div class="a" style="left:265.48px;top:165.45px;width:9.42px;height:9.43px;background:#e6e6f8"></div>
<div class="a" style="left:265.48px;top:174.88px;width:9.42px;height:9.43px;background:#dcdcf0"></div>
<div class="a" style="left:265.48px;top:184.31px;width:9.42px;height:9.43px;background:#dcdcf0"></div>
<div class="a" style="left:265.48px;top:193.74px;width:9.42px;height:9.43px;background:#e6e6f8"></div>
<div class="a" style="left:265.48px;top:203.17px;width:9.42px;height:9.43px;background:#e6e6f8"></div>
<div class="a" style="left:265.48px;top:212.60px;width:9.42px;height:9.43px;background:#dcdcf0"></div>
<div class="a" style="left:265.48px;top:222.03px;width:9.42px;height:9.43px;background:#dcdcf0"></div>
<div class="a" style="left:265.48px;top:231.46px;width:9.42px;height:9.43px;background:#e6e6f8"></div>
<div class="a" style="left:265.48px;top:240.89px;width:9.42px;height:9.43px;background:#e6e6f8"></div>
<div class="a" style="left:265.48px;top:250.32px;width:9.42px;height:9.43px;background:#dcdcf0"></div>
<div class="a" style="left:265.48px;top:259.75px;width:9.42px;height:9.43px;background:#dcdcf0"></div>
<div class="a" style="left:265.48px;top:269.18px;width:9.42px;height:9.12px;background:#e6e6f8"></div>
<div class="a" style="left:274.90px;top:0;width:9.42px;height:5.6px;background:#ccd0e6"></div>
<div class="a" style="left:274.90px;top:5.6px;width:9.42px;height:9.2px;background:#74727c"></div>
<div class="a" style="left:274.90px;top:14.8px;width:9.42px;height:9.2px;background:#74727c"></div>
<div class="a" style="left:274.90px;top:24.00px;width:9.42px;height:9.43px;background:#b4bcd4"></div>
<div class="a" style="left:274.90px;top:33.43px;width:9.42px;height:9.43px;background:#b4bcd4"></div>
<div class="a" style="left:274.90px;top:42.86px;width:9.42px;height:9.43px;background:#d4d6ec"></div>
<div class="a" style="left:274.90px;top:52.29px;width:9.42px;height:9.43px;background:#d4d6ec"></div>
<div class="a" style="left:274.90px;top:61.72px;width:9.42px;height:9.43px;background:#b4bcd4"></div>
<div class="a" style="left:274.90px;top:71.15px;width:9.42px;height:9.43px;background:#b4bcd4"></div>
<div class="a" style="left:274.90px;top:80.58px;width:9.42px;height:9.43px;background:#d4d6ec"></div>
<div class="a" style="left:274.90px;top:90.01px;width:9.42px;height:9.43px;background:#d4d6ec"></div>
<div class="a" style="left:274.90px;top:99.44px;width:9.42px;height:9.43px;background:#b4bcd4"></div>
<div class="a" style="left:274.90px;top:108.87px;width:9.42px;height:9.43px;background:#b4bcd4"></div>
<div class="a" style="left:274.90px;top:118.30px;width:9.42px;height:9.43px;background:#d4d6ec"></div>
<div class="a" style="left:274.90px;top:127.73px;width:9.42px;height:9.43px;background:#d4d6ec"></div>
<div class="a" style="left:274.90px;top:137.16px;width:9.42px;height:9.43px;background:#b4bcd4"></div>
<div class="a" style="left:274.90px;top:146.59px;width:9.42px;height:9.43px;background:#b4bcd4"></div>
<div class="a" style="left:274.90px;top:156.02px;width:9.42px;height:9.43px;background:#d4d6ec"></div>
<div class="a" style="left:274.90px;top:165.45px;width:9.42px;height:9.43px;background:#d4d6ec"></div>
<div class="a" style="left:274.90px;top:174.88px;width:9.42px;height:9.43px;background:#b4bcd4"></div>
<div class="a" style="left:274.90px;top:184.31px;width:9.42px;height:9.43px;background:#b4bcd4"></div>
<div class="a" style="left:274.90px;top:193.74px;width:9.42px;height:9.43px;background:#d4d6ec"></div>
<div class="a" style="left:274.90px;top:203.17px;width:9.42px;height:9.43px;background:#d4d6ec"></div>
<div class="a" style="left:274.90px;top:212.60px;width:9.42px;height:9.43px;background:#b4bcd4"></div>
<div class="a" style="left:274.90px;top:222.03px;width:9.42px;height:9.43px;background:#b4bcd4"></div>
<div class="a" style="left:274.90px;top:231.46px;width:9.42px;height:9.43px;background:#d4d6ec"></div>
<div class="a" style="left:274.90px;top:240.89px;width:9.42px;height:9.43px;background:#d4d6ec"></div>
<div class="a" style="left:274.90px;top:250.32px;width:9.42px;height:9.43px;background:#b4bcd4"></div>
<div class="a" style="left:274.90px;top:259.75px;width:9.42px;height:9.43px;background:#b4bcd4"></div>
<div class="a" style="left:274.90px;top:269.18px;width:9.42px;height:9.12px;background:#d4d6ec"></div>
<div class="a" style="left:284.32px;top:0;width:9.42px;height:5.6px;background:#d4d6ec"></div>
<div class="a" style="left:284.32px;top:5.6px;width:9.42px;height:9.2px;background:#72707a"></div>
<div class="a" style="left:284.32px;top:14.8px;width:9.42px;height:9.2px;background:#72707a"></div>
<div class="a" style="left:284.32px;top:24.00px;width:9.42px;height:9.43px;background:#c0c6dc"></div>
<div class="a" style="left:284.32px;top:33.43px;width:9.42px;height:9.43px;background:#c0c6dc"></div>
<div class="a" style="left:284.32px;top:42.86px;width:9.42px;height:9.43px;background:#d8daf0"></div>
<div class="a" style="left:284.32px;top:52.29px;width:9.42px;height:9.43px;background:#d8daf0"></div>
<div class="a" style="left:284.32px;top:61.72px;width:9.42px;height:9.43px;background:#c0c6dc"></div>
<div class="a" style="left:284.32px;top:71.15px;width:9.42px;height:9.43px;background:#c0c6dc"></div>
<div class="a" style="left:284.32px;top:80.58px;width:9.42px;height:9.43px;background:#d8daf0"></div>
<div class="a" style="left:284.32px;top:90.01px;width:9.42px;height:9.43px;background:#d8daf0"></div>
<div class="a" style="left:284.32px;top:99.44px;width:9.42px;height:9.43px;background:#c0c6dc"></div>
<div class="a" style="left:284.32px;top:108.87px;width:9.42px;height:9.43px;background:#c0c6dc"></div>
<div class="a" style="left:284.32px;top:118.30px;width:9.42px;height:9.43px;background:#d8daf0"></div>
<div class="a" style="left:284.32px;top:127.73px;width:9.42px;height:9.43px;background:#d8daf0"></div>
<div class="a" style="left:284.32px;top:137.16px;width:9.42px;height:9.43px;background:#c0c6dc"></div>
<div class="a" style="left:284.32px;top:146.59px;width:9.42px;height:9.43px;background:#c0c6dc"></div>
<div class="a" style="left:284.32px;top:156.02px;width:9.42px;height:9.43px;background:#d8daf0"></div>
<div class="a" style="left:284.32px;top:165.45px;width:9.42px;height:9.43px;background:#d8daf0"></div>
<div class="a" style="left:284.32px;top:174.88px;width:9.42px;height:9.43px;background:#c0c6dc"></div>
<div class="a" style="left:284.32px;top:184.31px;width:9.42px;height:9.43px;background:#c0c6dc"></div>
<div class="a" style="left:284.32px;top:193.74px;width:9.42px;height:9.43px;background:#d8daf0"></div>
<div class="a" style="left:284.32px;top:203.17px;width:9.42px;height:9.43px;background:#d8daf0"></div>
<div class="a" style="left:284.32px;top:212.60px;width:9.42px;height:9.43px;background:#c0c6dc"></div>
<div class="a" style="left:284.32px;top:222.03px;width:9.42px;height:9.43px;background:#c0c6dc"></div>
<div class="a" style="left:284.32px;top:231.46px;width:9.42px;height:9.43px;background:#d8daf0"></div>
<div class="a" style="left:284.32px;top:240.89px;width:9.42px;height:9.43px;background:#d8daf0"></div>
<div class="a" style="left:284.32px;top:250.32px;width:9.42px;height:9.43px;background:#c0c6dc"></div>
<div class="a" style="left:284.32px;top:259.75px;width:9.42px;height:9.43px;background:#c0c6dc"></div>
<div class="a" style="left:284.32px;top:269.18px;width:9.42px;height:9.12px;background:#d8daf0"></div>
<div class="a" style="left:293.74px;top:0;width:9.42px;height:5.6px;background:#d4d6ea"></div>
<div class="a" style="left:293.74px;top:5.6px;width:9.42px;height:9.2px;background:#76747e"></div>
<div class="a" style="left:293.74px;top:14.8px;width:9.42px;height:9.2px;background:#76747e"></div>
<div class="a" style="left:293.74px;top:24.00px;width:9.42px;height:9.43px;background:#c4c6da"></div>
<div class="a" style="left:293.74px;top:33.43px;width:9.42px;height:9.43px;background:#c4c6da"></div>
<div class="a" style="left:293.74px;top:42.86px;width:9.42px;height:9.43px;background:#dcdcf0"></div>
<div class="a" style="left:293.74px;top:52.29px;width:9.42px;height:9.43px;background:#dcdcf0"></div>
<div class="a" style="left:293.74px;top:61.72px;width:9.42px;height:9.43px;background:#c4c6da"></div>
<div class="a" style="left:293.74px;top:71.15px;width:9.42px;height:9.43px;background:#c4c6da"></div>
<div class="a" style="left:293.74px;top:80.58px;width:9.42px;height:9.43px;background:#dcdcf0"></div>
<div class="a" style="left:293.74px;top:90.01px;width:9.42px;height:9.43px;background:#dcdcf0"></div>
<div class="a" style="left:293.74px;top:99.44px;width:9.42px;height:9.43px;background:#c4c6da"></div>
<div class="a" style="left:293.74px;top:108.87px;width:9.42px;height:9.43px;background:#c4c6da"></div>
<div class="a" style="left:293.74px;top:118.30px;width:9.42px;height:9.43px;background:#dcdcf0"></div>
<div class="a" style="left:293.74px;top:127.73px;width:9.42px;height:9.43px;background:#dcdcf0"></div>
<div class="a" style="left:293.74px;top:137.16px;width:9.42px;height:9.43px;background:#c4c6da"></div>
<div class="a" style="left:293.74px;top:146.59px;width:9.42px;height:9.43px;background:#c4c6da"></div>
<div class="a" style="left:293.74px;top:156.02px;width:9.42px;height:9.43px;background:#dcdcf0"></div>
<div class="a" style="left:293.74px;top:165.45px;width:9.42px;height:9.43px;background:#dcdcf0"></div>
<div class="a" style="left:293.74px;top:174.88px;width:9.42px;height:9.43px;background:#c4c6da"></div>
<div class="a" style="left:293.74px;top:184.31px;width:9.42px;height:9.43px;background:#c4c6da"></div>
<div class="a" style="left:293.74px;top:193.74px;width:9.42px;height:9.43px;background:#dcdcf0"></div>
<div class="a" style="left:293.74px;top:203.17px;width:9.42px;height:9.43px;background:#dcdcf0"></div>
<div class="a" style="left:293.74px;top:212.60px;width:9.42px;height:9.43px;background:#c4c6da"></div>
<div class="a" style="left:293.74px;top:222.03px;width:9.42px;height:9.43px;background:#c4c6da"></div>
<div class="a" style="left:293.74px;top:231.46px;width:9.42px;height:9.43px;background:#dcdcf0"></div>
<div class="a" style="left:293.74px;top:240.89px;width:9.42px;height:9.43px;background:#dcdcf0"></div>
<div class="a" style="left:293.74px;top:250.32px;width:9.42px;height:9.43px;background:#c4c6da"></div>
<div class="a" style="left:293.74px;top:259.75px;width:9.42px;height:9.43px;background:#c4c6da"></div>
<div class="a" style="left:293.74px;top:269.18px;width:9.42px;height:9.12px;background:#dcdcf0"></div>
<div class="a" style="left:303.16px;top:0;width:9.42px;height:5.6px;background:#d4d6ec"></div>
<div class="a" style="left:303.16px;top:5.6px;width:9.42px;height:9.2px;background:#74727c"></div>
<div class="a" style="left:303.16px;top:14.8px;width:9.42px;height:9.2px;background:#706e78"></div>
<div class="a" style="left:303.16px;top:24.00px;width:9.42px;height:9.43px;background:#c6c8e0"></div>
<div class="a" style="left:303.16px;top:33.43px;width:9.42px;height:9.43px;background:#c6c8e0"></div>
<div class="a" style="left:303.16px;top:42.86px;width:9.42px;height:9.43px;background:#d8d8f0"></div>
<div class="a" style="left:303.16px;top:52.29px;width:9.42px;height:9.43px;background:#d8d8f0"></div>
<div class="a" style="left:303.16px;top:61.72px;width:9.42px;height:9.43px;background:#c6c8e0"></div>
<div class="a" style="left:303.16px;top:71.15px;width:9.42px;height:9.43px;background:#c6c8e0"></div>
<div class="a" style="left:303.16px;top:80.58px;width:9.42px;height:9.43px;background:#d8d8f0"></div>
<div class="a" style="left:303.16px;top:90.01px;width:9.42px;height:9.43px;background:#d8d8f0"></div>
<div class="a" style="left:303.16px;top:99.44px;width:9.42px;height:9.43px;background:#c6c8e0"></div>
<div class="a" style="left:303.16px;top:108.87px;width:9.42px;height:9.43px;background:#c6c8e0"></div>
<div class="a" style="left:303.16px;top:118.30px;width:9.42px;height:9.43px;background:#d8d8f0"></div>
<div class="a" style="left:303.16px;top:127.73px;width:9.42px;height:9.43px;background:#d8d8f0"></div>
<div class="a" style="left:303.16px;top:137.16px;width:9.42px;height:9.43px;background:#c6c8e0"></div>
<div class="a" style="left:303.16px;top:146.59px;width:9.42px;height:9.43px;background:#c6c8e0"></div>
<div class="a" style="left:303.16px;top:156.02px;width:9.42px;height:9.43px;background:#d8d8f0"></div>
<div class="a" style="left:303.16px;top:165.45px;width:9.42px;height:9.43px;background:#d8d8f0"></div>
<div class="a" style="left:303.16px;top:174.88px;width:9.42px;height:9.43px;background:#c6c8e0"></div>
<div class="a" style="left:303.16px;top:184.31px;width:9.42px;height:9.43px;background:#c6c8e0"></div>
<div class="a" style="left:303.16px;top:193.74px;width:9.42px;height:9.43px;background:#d8d8f0"></div>
<div class="a" style="left:303.16px;top:203.17px;width:9.42px;height:9.43px;background:#d8d8f0"></div>
<div class="a" style="left:303.16px;top:212.60px;width:9.42px;height:9.43px;background:#c6c8e0"></div>
<div class="a" style="left:303.16px;top:222.03px;width:9.42px;height:9.43px;background:#c6c8e0"></div>
<div class="a" style="left:303.16px;top:231.46px;width:9.42px;height:9.43px;background:#d8d8f0"></div>
<div class="a" style="left:303.16px;top:240.89px;width:9.42px;height:9.43px;background:#d8d8f0"></div>
<div class="a" style="left:303.16px;top:250.32px;width:9.42px;height:9.43px;background:#c6c8e0"></div>
<div class="a" style="left:303.16px;top:259.75px;width:9.42px;height:9.43px;background:#c6c8e0"></div>
<div class="a" style="left:303.16px;top:269.18px;width:9.42px;height:9.12px;background:#d8d8f0"></div>
<div class="a" style="left:312.58px;top:0;width:9.42px;height:5.6px;background:#d8daee"></div>
<div class="a" style="left:312.58px;top:5.6px;width:9.42px;height:9.2px;background:#6c6a74"></div>
<div class="a" style="left:312.58px;top:14.8px;width:9.42px;height:9.2px;background:#72707a"></div>
<div class="a" style="left:312.58px;top:24.00px;width:9.42px;height:9.43px;background:#ced0e4"></div>
<div class="a" style="left:312.58px;top:33.43px;width:9.42px;height:9.43px;background:#ced0e4"></div>
<div class="a" style="left:312.58px;top:42.86px;width:9.42px;height:9.43px;background:#e4e4f6"></div>
<div class="a" style="left:312.58px;top:52.29px;width:9.42px;height:9.43px;background:#e4e4f6"></div>
<div class="a" style="left:312.58px;top:61.72px;width:9.42px;height:9.43px;background:#ced0e4"></div>
<div class="a" style="left:312.58px;top:71.15px;width:9.42px;height:9.43px;background:#ced0e4"></div>
<div class="a" style="left:312.58px;top:80.58px;width:9.42px;height:9.43px;background:#e4e4f6"></div>
<div class="a" style="left:312.58px;top:90.01px;width:9.42px;height:9.43px;background:#e4e4f6"></div>
<div class="a" style="left:312.58px;top:99.44px;width:9.42px;height:9.43px;background:#ced0e4"></div>
<div class="a" style="left:312.58px;top:108.87px;width:9.42px;height:9.43px;background:#ced0e4"></div>
<div class="a" style="left:312.58px;top:118.30px;width:9.42px;height:9.43px;background:#e4e4f6"></div>
<div class="a" style="left:312.58px;top:127.73px;width:9.42px;height:9.43px;background:#e4e4f6"></div>
<div class="a" style="left:312.58px;top:137.16px;width:9.42px;height:9.43px;background:#ced0e4"></div>
<div class="a" style="left:312.58px;top:146.59px;width:9.42px;height:9.43px;background:#ced0e4"></div>
<div class="a" style="left:312.58px;top:156.02px;width:9.42px;height:9.43px;background:#e4e4f6"></div>
<div class="a" style="left:312.58px;top:165.45px;width:9.42px;height:9.43px;background:#e4e4f6"></div>
<div class="a" style="left:312.58px;top:174.88px;width:9.42px;height:9.43px;background:#ced0e4"></div>
<div class="a" style="left:312.58px;top:184.31px;width:9.42px;height:9.43px;background:#ced0e4"></div>
<div class="a" style="left:312.58px;top:193.74px;width:9.42px;height:9.43px;background:#e4e4f6"></div>
<div class="a" style="left:312.58px;top:203.17px;width:9.42px;height:9.43px;background:#e4e4f6"></div>
<div class="a" style="left:312.58px;top:212.60px;width:9.42px;height:9.43px;background:#ced0e4"></div>
<div class="a" style="left:312.58px;top:222.03px;width:9.42px;height:9.43px;background:#ced0e4"></div>
<div class="a" style="left:312.58px;top:231.46px;width:9.42px;height:9.43px;background:#e4e4f6"></div>
<div class="a" style="left:312.58px;top:240.89px;width:9.42px;height:9.43px;background:#e4e4f6"></div>
<div class="a" style="left:312.58px;top:250.32px;width:9.42px;height:9.43px;background:#ced0e4"></div>
<div class="a" style="left:312.58px;top:259.75px;width:9.42px;height:9.43px;background:#ced0e4"></div>
<div class="a" style="left:312.58px;top:269.18px;width:9.42px;height:9.12px;background:#e4e4f6"></div>
<div class="a" style="left:322.00px;top:0;width:9.42px;height:5.6px;background:#d0d2e6"></div>
<div class="a" style="left:322.00px;top:5.6px;width:9.42px;height:9.2px;background:#7c7a84"></div>
<div class="a" style="left:322.00px;top:14.8px;width:9.42px;height:9.2px;background:#76747e"></div>
<div class="a" style="left:322.00px;top:24.00px;width:9.42px;height:9.43px;background:#c0c2d6"></div>
<div class="a" style="left:322.00px;top:33.43px;width:9.42px;height:9.43px;background:#c0c2d6"></div>
<div class="a" style="left:322.00px;top:42.86px;width:9.42px;height:9.43px;background:#d6d6ea"></div>
<div class="a" style="left:322.00px;top:52.29px;width:9.42px;height:9.43px;background:#d6d6ea"></div>
<div class="a" style="left:322.00px;top:61.72px;width:9.42px;height:9.43px;background:#c0c2d6"></div>
<div class="a" style="left:322.00px;top:71.15px;width:9.42px;height:9.43px;background:#c0c2d6"></div>
<div class="a" style="left:322.00px;top:80.58px;width:9.42px;height:9.43px;background:#d6d6ea"></div>
<div class="a" style="left:322.00px;top:90.01px;width:9.42px;height:9.43px;background:#d6d6ea"></div>
<div class="a" style="left:322.00px;top:99.44px;width:9.42px;height:9.43px;background:#c0c2d6"></div>
<div class="a" style="left:322.00px;top:108.87px;width:9.42px;height:9.43px;background:#c0c2d6"></div>
<div class="a" style="left:322.00px;top:118.30px;width:9.42px;height:9.43px;background:#d6d6ea"></div>
<div class="a" style="left:322.00px;top:127.73px;width:9.42px;height:9.43px;background:#d6d6ea"></div>
<div class="a" style="left:322.00px;top:137.16px;width:9.42px;height:9.43px;background:#c0c2d6"></div>
<div class="a" style="left:322.00px;top:146.59px;width:9.42px;height:9.43px;background:#c0c2d6"></div>
<div class="a" style="left:322.00px;top:156.02px;width:9.42px;height:9.43px;background:#d6d6ea"></div>
<div class="a" style="left:322.00px;top:165.45px;width:9.42px;height:9.43px;background:#d6d6ea"></div>
<div class="a" style="left:322.00px;top:174.88px;width:9.42px;height:9.43px;background:#c0c2d6"></div>
<div class="a" style="left:322.00px;top:184.31px;width:9.42px;height:9.43px;background:#c0c2d6"></div>
<div class="a" style="left:322.00px;top:193.74px;width:9.42px;height:9.43px;background:#d6d6ea"></div>
<div class="a" style="left:322.00px;top:203.17px;width:9.42px;height:9.43px;background:#d6d6ea"></div>
<div class="a" style="left:322.00px;top:212.60px;width:9.42px;height:9.43px;background:#c0c2d6"></div>
<div class="a" style="left:322.00px;top:222.03px;width:9.42px;height:9.43px;background:#c0c2d6"></div>
<div class="a" style="left:322.00px;top:231.46px;width:9.42px;height:9.43px;background:#d6d6ea"></div>
<div class="a" style="left:322.00px;top:240.89px;width:9.42px;height:9.43px;background:#d6d6ea"></div>
<div class="a" style="left:322.00px;top:250.32px;width:9.42px;height:9.43px;background:#c0c2d6"></div>
<div class="a" style="left:322.00px;top:259.75px;width:9.42px;height:9.43px;background:#c0c2d6"></div>
<div class="a" style="left:322.00px;top:269.18px;width:9.42px;height:9.12px;background:#d6d6ea"></div>
<div class="a" style="left:331.42px;top:0;width:9.42px;height:5.6px;background:#e0e0f4"></div>
<div class="a" style="left:331.42px;top:5.6px;width:9.42px;height:9.2px;background:#6a6872"></div>
<div class="a" style="left:331.42px;top:14.8px;width:9.42px;height:9.2px;background:#6a6872"></div>
<div class="a" style="left:331.42px;top:24.00px;width:9.42px;height:9.43px;background:#e0e0f4"></div>
<div class="a" style="left:331.42px;top:33.43px;width:9.42px;height:9.43px;background:#e0e0f4"></div>
<div class="a" style="left:331.42px;top:42.86px;width:9.42px;height:9.43px;background:#e2e2f6"></div>
<div class="a" style="left:331.42px;top:52.29px;width:9.42px;height:9.43px;background:#e2e2f6"></div>
<div class="a" style="left:331.42px;top:61.72px;width:9.42px;height:9.43px;background:#e0e0f4"></div>
<div class="a" style="left:331.42px;top:71.15px;width:9.42px;height:9.43px;background:#e0e0f4"></div>
<div class="a" style="left:331.42px;top:80.58px;width:9.42px;height:9.43px;background:#e2e2f6"></div>
<div class="a" style="left:331.42px;top:90.01px;width:9.42px;height:9.43px;background:#e2e2f6"></div>
<div class="a" style="left:331.42px;top:99.44px;width:9.42px;height:9.43px;background:#e0e0f4"></div>
<div class="a" style="left:331.42px;top:108.87px;width:9.42px;height:9.43px;background:#e0e0f4"></div>
<div class="a" style="left:331.42px;top:118.30px;width:9.42px;height:9.43px;background:#e2e2f6"></div>
<div class="a" style="left:331.42px;top:127.73px;width:9.42px;height:9.43px;background:#e2e2f6"></div>
<div class="a" style="left:331.42px;top:137.16px;width:9.42px;height:9.43px;background:#e0e0f4"></div>
<div class="a" style="left:331.42px;top:146.59px;width:9.42px;height:9.43px;background:#e0e0f4"></div>
<div class="a" style="left:331.42px;top:156.02px;width:9.42px;height:9.43px;background:#e2e2f6"></div>
<div class="a" style="left:331.42px;top:165.45px;width:9.42px;height:9.43px;background:#e2e2f6"></div>
<div class="a" style="left:331.42px;top:174.88px;width:9.42px;height:9.43px;background:#e0e0f4"></div>
<div class="a" style="left:331.42px;top:184.31px;width:9.42px;height:9.43px;background:#e0e0f4"></div>
<div class="a" style="left:331.42px;top:193.74px;width:9.42px;height:9.43px;background:#e2e2f6"></div>
<div class="a" style="left:331.42px;top:203.17px;width:9.42px;height:9.43px;background:#e2e2f6"></div>
<div class="a" style="left:331.42px;top:212.60px;width:9.42px;height:9.43px;background:#e0e0f4"></div>
<div class="a" style="left:331.42px;top:222.03px;width:9.42px;height:9.43px;background:#e0e0f4"></div>
<div class="a" style="left:331.42px;top:231.46px;width:9.42px;height:9.43px;background:#e2e2f6"></div>
<div class="a" style="left:331.42px;top:240.89px;width:9.42px;height:9.43px;background:#e2e2f6"></div>
<div class="a" style="left:331.42px;top:250.32px;width:9.42px;height:9.43px;background:#e0e0f4"></div>
<div class="a" style="left:331.42px;top:259.75px;width:9.42px;height:9.43px;background:#e0e0f4"></div>
<div class="a" style="left:331.42px;top:269.18px;width:9.42px;height:9.12px;background:#e2e2f6"></div>
<div class="a" style="left:0;top:281px;width:756px;height:1px;background:#f4f4ff"></div>
<div class="a" style="left:0;top:0;width:1px;height:8.5px;background:#f4f4ff"></div>
<div class="a" style="left:0;top:21px;width:1px;height:260px;background:#f4f4ff"></div>
<div class="a" style="left:6px;top:8px;width:1px;height:275px;background:#4d5462"></div>
<div class="a" style="left:6px;top:0;width:1px;height:8px;background:#4d5462"></div>
<div class="a" style="left:6px;top:8.80px;width:1px;height:12px;background:#8a8a8a"></div>
<div class="a" style="left:4.4px;top:0.7px;width:4.2px;height:4.2px;border-radius:50%;background:#14242a"></div>
<div class="a" style="left:4.1px;top:12.9px;width:4.7px;height:4.7px;border-radius:50%;background:#a9a9a9"></div>
</div>
<div class="dt">
<div class="d" style="top:0.00px">
<div class="hl" style="left:16.7px;background:#1e1e1e"></div>
<div class="a" style="left:6.60px;top:3.5px;width:0;height:0;border-top:3px solid transparent;border-bottom:3px solid transparent;border-left:4px solid #a8a8a8"></div>
<span class="t" style="left:19.50px;color:#eeeeee">Transmission Control Protocol, Src Port: 40578, Dst Port: 636, Seq: 1449, Ack: 1, Len: 115</span>
</div>
<div class="d" style="top:12.53px">
<div class="a" style="left:6.60px;top:3.5px;width:0;height:0;border-top:3px solid transparent;border-bottom:3px solid transparent;border-left:4px solid #a8a8a8"></div>
<span class="t" style="left:19.50px;color:#eeeeee">[2 Reassembled TCP Segments (1563 bytes): #56(1448), #57(115)]</span>
</div>
<div class="d" style="top:25.06px">
<div class="hl" style="left:16.20px"></div>
<div class="a" style="left:5.50px;top:5px;width:0;height:0;border-left:3px solid transparent;border-right:3px solid transparent;border-top:4px solid #a8a8a8"></div>
<span class="t" style="left:19.50px;color:#0a0f24">Transport Layer Security</span>
</div>
<div class="d" style="top:37.59px">
<div class="hl" style="left:31.70px"></div>
<div class="a" style="left:21.00px;top:5px;width:0;height:0;border-left:3px solid transparent;border-right:3px solid transparent;border-top:4px solid #a8a8a8"></div>
<span class="t" style="left:35.00px;color:#0a0f24">TLSv1.3 Record Layer: Handshake Protocol: Client Hello</span>
</div>
<div class="d" style="top:50.12px">
<span class="t" style="left:50.50px;color:#eeeeee">Content Type: Handshake (22)</span>
</div>
<div class="d" style="top:62.65px">
<span class="t" style="left:50.50px;color:#eeeeee">Version: TLS 1.0 (0x0301)</span>
</div>
<div class="d" style="top:75.18px">
<span class="t" style="left:50.50px;color:#eeeeee">Length: 1558</span>
</div>
<div class="d" style="top:87.71px">
<div class="hl" style="left:47.20px"></div>
<div class="a" style="left:36.50px;top:5px;width:0;height:0;border-left:3px solid transparent;border-right:3px solid transparent;border-top:4px solid #a8a8a8"></div>
<span class="t" style="left:50.50px;color:#0a0f24">Handshake Protocol: Client Hello</span>
</div>
<div class="d" style="top:100.24px">
<span class="t" style="left:66.00px;color:#eeeeee">Handshake Type: Client Hello (1)</span>
</div>
<div class="d" style="top:112.77px">
<span class="t" style="left:66.00px;color:#eeeeee">Length: 1554</span>
</div>
<div class="d" style="top:125.30px">
<div class="hl" style="left:62.70px"></div>
<div class="a" style="left:53.10px;top:3.5px;width:0;height:0;border-top:3px solid transparent;border-bottom:3px solid transparent;border-left:4px solid #a8a8a8"></div>
<span class="t" style="left:66.00px;color:#0a0f24">Version: TLS 1.2 (0x0303)</span>
</div>
<div class="d" style="top:137.83px">
<span class="t" style="left:66.00px;color:#eeeeee">Random: 337a380949a6228afb56c1e1365c42774dea6c2a7c47247095d61c7fa4b17672</span>
</div>
<div class="d" style="top:150.36px">
<span class="t" style="left:66.00px;color:#eeeeee">Session ID Length: 32</span>
</div>
<div class="d" style="top:162.89px">
<span class="t" style="left:66.00px;color:#eeeeee">Session ID: a96fb84528f114f413b5bf145eb90243287d5420ebc18ab354e4e8644e90456c</span>
</div>
<div class="d" style="top:175.42px">
<span class="t" style="left:66.00px;color:#eeeeee">Cipher Suites Length: 60</span>
</div>
<div class="d" style="top:187.95px">
<div class="a" style="left:53.10px;top:3.5px;width:0;height:0;border-top:3px solid transparent;border-bottom:3px solid transparent;border-left:4px solid #a8a8a8"></div>
<span class="t" style="left:66.00px;color:#eeeeee">Cipher Suites (30 suites)</span>
</div>
<div class="d" style="top:200.48px">
<span class="t" style="left:66.00px;color:#eeeeee">Compression Methods Length: 1</span>
</div>
<div class="d" style="top:213.01px">
<div class="a" style="left:53.10px;top:3.5px;width:0;height:0;border-top:3px solid transparent;border-bottom:3px solid transparent;border-left:4px solid #a8a8a8"></div>
<span class="t" style="left:66.00px;color:#eeeeee">Compression Methods (1 method)</span>
</div>
<div class="d" style="top:225.54px">
<span class="t" style="left:66.00px;color:#eeeeee">Extensions Length: 1421</span>
</div>
<div class="d" style="top:238.07px">
<div class="a" style="left:53.10px;top:3.5px;width:0;height:0;border-top:3px solid transparent;border-bottom:3px solid transparent;border-left:4px solid #a8a8a8"></div>
<span class="t" style="left:66.00px;color:#eeeeee">Extension: renegotiation_info (len=1)</span>
</div>
<div class="d" style="top:250.60px">
<div class="a" style="left:53.10px;top:3.5px;width:0;height:0;border-top:3px solid transparent;border-bottom:3px solid transparent;border-left:4px solid #a8a8a8"></div>
<span class="t" style="left:66.00px;color:#eeeeee">Extension: server_name (len=26) name=ldap.it-connect.local</span>
</div>
<div class="d" style="top:263.13px">
<div class="a" style="left:53.10px;top:3.5px;width:0;height:0;border-top:3px solid transparent;border-bottom:3px solid transparent;border-left:4px solid #a8a8a8"></div>
<span class="t" style="left:66.00px;color:#eeeeee">Extension: ec_point_formats (len=4)</span>
</div>
<div class="d" style="top:275.66px">
<div class="a" style="left:53.10px;top:3.5px;width:0;height:0;border-top:3px solid transparent;border-bottom:3px solid transparent;border-left:4px solid #a8a8a8"></div>
<span class="t" style="left:66.00px;color:#eeeeee">Extension: supported_groups (len=18)</span>
</div>
<div class="d" style="top:288.19px">
<div class="a" style="left:53.10px;top:3.5px;width:0;height:0;border-top:3px solid transparent;border-bottom:3px solid transparent;border-left:4px solid #a8a8a8"></div>
<span class="t" style="left:66.00px;color:#eeeeee">Extension: session_ticket (len=0)</span>
</div>
</div>
<div class="a" style="left:0;top:282px;width:756px;height:1px;background:#2a2a2a"></div>
<div class="a" style="left:0;top:283px;width:756px;height:10px;background:#4e4e4e;border-top:1px solid #595959;border-bottom:1px solid #565656"></div>
<div class="a" style="left:0;top:283px;width:1px;height:10px;background:#2a2a2a"></div>
<div class="a" style="left:11.3px;top:283px;width:1px;height:10px;background:#333"></div>
<div class="a" style="left:3.8px;top:285px;width:0;height:0;border-top:3px solid transparent;border-bottom:3px solid transparent;border-right:3.5px solid #c8c8c8"></div>
<div class="a" style="left:748.0px;top:294.5px;width:1.5px;height:1.5px;background:#5a5a5a"></div>
<div class="a" style="left:750.5px;top:294.5px;width:1.5px;height:1.5px;background:#5a5a5a"></div>
<div class="a" style="left:753.0px;top:294.5px;width:1.5px;height:1.5px;background:#5a5a5a"></div>
<div class="a" style="left:740px;top:297.4px;width:16px;height:297px;background:#1c1c1c"></div>
<div class="a" style="left:740px;top:297.4px;width:11px;height:10.5px;background:#4a4a4a;border:1px solid #555"></div>
<div class="a" style="left:742.3px;top:299.8px;width:0;height:0;border-left:3.2px solid transparent;border-right:3.2px solid transparent;border-bottom:3.5px solid #d0d0d0"></div>
<div class="a" style="left:740px;top:308.5px;width:11px;height:24px;background:#484848;border-left:1px solid #3a3a3a"></div>
<div class="a" style="left:740px;top:333.5px;width:11px;height:226px;background:#4a4a4a;border:1px solid #555"></div>
<div class="a" style="left:740px;top:560px;width:11px;height:34px;background:#464646;border-left:1px solid #3a3a3a"></div>
<div class="a" style="left:752.5px;top:467.5px;width:1.5px;height:1.2px;background:#5a5a5a"></div>
<div class="a" style="left:752.5px;top:469.9px;width:1.5px;height:1.2px;background:#5a5a5a"></div>
<div class="a" style="left:752.5px;top:472.3px;width:1.5px;height:1.2px;background:#5a5a5a"></div>
<div class="a" style="left:752.5px;top:474.7px;width:1.5px;height:1.2px;background:#5a5a5a"></div>
<div class="a" style="left:752.5px;top:477.1px;width:1.5px;height:1.2px;background:#5a5a5a"></div>
<div class="a" style="left:752.5px;top:479.5px;width:1.5px;height:1.2px;background:#5a5a5a"></div>
<div class="a" style="left:0;top:297.4px;width:1px;height:297px;background:#1e1e1e"></div>
<div class="a" style="left:11.9px;top:318px;width:338.2px;height:33px;border:2.5px solid #f2a84e"></div>
<div class="a" style="left:240.2px;top:544.8px;width:156.5px;height:21.7px;border:2.5px solid #f2a84e"></div>
</body></html>
